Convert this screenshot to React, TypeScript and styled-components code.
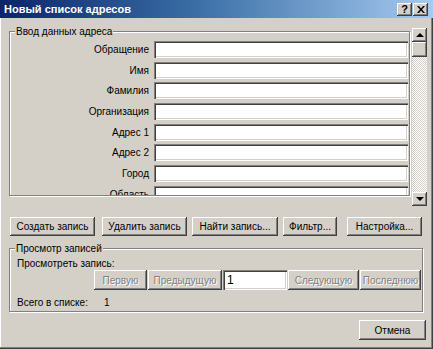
import React from 'react';
import styled, { createGlobalStyle } from 'styled-components';

const GlobalStyle = createGlobalStyle`
  html, body {
    margin: 0;
    padding: 0;
    background: #d4d0c8;
  }
  body {
    font-family: "Liberation Sans", Arial, sans-serif;
    font-size: 10px;
    color: #000;
  }
  * {
    box-sizing: border-box;
  }
`;

const Window = styled.div`
  width: 433px;
  height: 349px;
  display: flex;
  flex-direction: column;
  background: #d4d0c8;
  box-shadow: inset -1px -1px 0 #404040, inset -2px -2px 0 #808080, inset 1px 0 0 #fff;
  overflow: hidden;
`;

const TitleBar = styled.div`
  height: 18px;
  flex: none;
  display: flex;
  align-items: center;
  justify-content: space-between;
  padding: 0 5px 0 4px;
  background: linear-gradient(to right, #0a246a 0%, #3a6ea5 45%, #a6caf0 100%);
`;

const TitleText = styled.span`
  color: #fff;
  font-weight: bold;
  font-size: 11px;
`;

const CaptionButtons = styled.div`
  display: flex;
  gap: 1px;
`;

const CaptionButton = styled.div`
  width: 15px;
  height: 13px;
  display: flex;
  align-items: center;
  justify-content: center;
  background: #d4d0c8;
  box-shadow: inset -1px -1px 0 #404040, inset 1px 1px 0 #fff, inset -2px -2px 0 #808080;
  font-weight: bold;
  font-size: 11px;
  line-height: 1;
`;

const Body = styled.div`
  flex: 1;
  display: flex;
  flex-direction: column;
  padding: 10px 6px 0 9px;
`;

const TopRow = styled.div`
  display: flex;
  align-items: flex-start;
  gap: 2px;
`;

const Group = styled.div<{ $w: number; $h: number }>`
  position: relative;
  width: ${({ $w }) => $w}px;
  height: ${({ $h }) => $h}px;
  border: 1px solid #808080;
  box-shadow: inset 1px 1px 0 #fff, 1px 1px 0 #fff;
  flex: none;
`;

const Legend = styled.span`
  position: absolute;
  top: -7px;
  left: 5px;
  padding: 0 1px;
  background: #d4d0c8;
  line-height: 13px;
  z-index: 1;
`;

const FieldArea = styled.div`
  height: 100%;
  overflow: hidden;
  padding: 9px 1px 0 0;
  display: flex;
  flex-direction: column;
  gap: 3.7px;
`;

const FieldRow = styled.div`
  display: grid;
  grid-template-columns: 139px 1fr;
  column-gap: 5px;
  align-items: center;
  height: 17px;
  flex: none;
`;

const FieldLabel = styled.span`
  text-align: right;
  white-space: nowrap;
`;

const TextBox = styled.div<{ $w?: number }>`
  height: ${({ $w }) => ($w ? '20px' : '17px')};
  ${({ $w }) => ($w ? `width: ${$w}px;` : '')}
  background: #fff;
  box-shadow: inset 1px 1px 0 #808080, inset 2px 2px 0 #404040, inset -1px -1px 0 #fff,
    inset -2px -2px 0 #d4d0c8;
  padding: 3px 0 0 4px;
  flex: none;
  font-size: 12px;
`;

const ScrollBar = styled.div`
  width: 15px;
  height: 178px;
  flex: none;
  display: flex;
  flex-direction: column;
`;

const ScrollButton = styled.div<{ $h: number }>`
  height: ${({ $h }) => $h}px;
  flex: none;
  display: flex;
  align-items: center;
  justify-content: center;
  background: #d4d0c8;
  box-shadow: inset -1px -1px 0 #404040, inset 1px 1px 0 #fff, inset -2px -2px 0 #808080;
`;

const Arrow = styled.div<{ $up?: boolean }>`
  width: 0;
  height: 0;
  border-left: 4px solid transparent;
  border-right: 4px solid transparent;
  ${({ $up }) => ($up ? 'border-bottom: 4px solid #000;' : 'border-top: 4px solid #000;')}
`;

const Track = styled.div`
  flex: 1;
  background-color: #fff;
  background-image: repeating-conic-gradient(#d4d0c8 0% 25%, #fff 0% 50%);
  background-size: 2px 2px;
`;

const ButtonRow = styled.div`
  display: flex;
  margin-top: 11px;
`;

const PushButton = styled.div<{ $w: number; $ml?: number; $h?: number; $disabled?: boolean }>`
  width: ${({ $w }) => $w}px;
  height: ${({ $h }) => $h ?? 19}px;
  margin-left: ${({ $ml }) => $ml ?? 0}px;
  flex: none;
  display: flex;
  align-items: center;
  justify-content: center;
  white-space: nowrap;
  background: #d4d0c8;
  box-shadow: inset -1px -1px 0 #404040, inset 1px 1px 0 #fff, inset -2px -2px 0 #808080;
  color: ${({ $disabled }) => ($disabled ? '#808080' : '#000')};
  text-shadow: ${({ $disabled }) => ($disabled ? '1px 1px 0 #fff' : 'none')};
`;

const ViewArea = styled.div`
  padding: 8px 0 0 7px;
  display: flex;
  flex-direction: column;
`;

const Line = styled.div`
  height: 13px;
  line-height: 13px;
  display: flex;
`;

const NavRow = styled.div`
  display: flex;
  gap: 1px;
  margin-left: 77px;
`;

const Count = styled.div`
  height: 13px;
  line-height: 13px;
  margin-top: 6px;
  display: flex;
`;

const CountLabel = styled.span`
  width: 87px;
`;

const Footer = styled.div`
  display: flex;
  justify-content: flex-end;
  margin-top: 8px;
  padding-right: 1px;
`;

const fields = ['Обращение', 'Имя', 'Фамилия', 'Организация', 'Адрес 1', 'Адрес 2', 'Город', 'Область'];

const actions = [
  { label: 'Создать запись', w: 85, ml: 1 },
  { label: 'Удалить запись', w: 85, ml: 7 },
  { label: 'Найти запись...', w: 86, ml: 5 },
  { label: 'Фильтр...', w: 54, ml: 5 },
  { label: 'Настройка...', w: 75, ml: 10 },
];

const App: React.FC = () => {
  return (
    <>
      <GlobalStyle />
      <Window>
        <TitleBar>
          <TitleText>Новый список адресов</TitleText>
          <CaptionButtons>
            <CaptionButton>?</CaptionButton>
            <CaptionButton>
              <svg width="8" height="7" viewBox="0 0 8 7">
                <path d="M0 0h2l2 2.5 2-2.5h2l-3 3.5 3 3.5h-2l-2-2.5-2 2.5h-2l3-3.5z" fill="#000" />
              </svg>
            </CaptionButton>
          </CaptionButtons>
        </TitleBar>

        <Body>
          <TopRow>
            <Group $w={401} $h={165} style={{ marginTop: 3 }}>
              <Legend>Ввод данных адреса</Legend>
              <FieldArea>
                {fields.map(f => (
                  <FieldRow key={f}>
                    <FieldLabel>{f}</FieldLabel>
                    <TextBox />
                  </FieldRow>
                ))}
              </FieldArea>
            </Group>
            <ScrollBar>
              <ScrollButton $h={14}>
                <Arrow $up />
              </ScrollButton>
              <ScrollButton $h={15} />
              <Track />
              <ScrollButton $h={14}>
                <Arrow />
              </ScrollButton>
            </ScrollBar>
          </TopRow>

          <ButtonRow>
            {actions.map(a => (
              <PushButton key={a.label} $w={a.w} $ml={a.ml}>
                {a.label}
              </PushButton>
            ))}
          </ButtonRow>

          <Group $w={414} $h={64} style={{ marginTop: 12 }}>
            <Legend>Просмотр записей</Legend>
            <ViewArea>
              <Line>Просмотреть запись:</Line>
              <NavRow>
                <PushButton $w={53} $h={20} $disabled>Первую</PushButton>
                <PushButton $w={74} $h={20} $disabled>Предыдущую</PushButton>
                <TextBox $w={64}>1</TextBox>
                <PushButton $w={71} $h={20} $disabled>Следующую</PushButton>
                <PushButton $w={61} $h={20} $disabled>Последнюю</PushButton>
              </NavRow>
              <Count>
                <CountLabel>Всего в списке:</CountLabel>
                <span>1</span>
              </Count>
            </ViewArea>
          </Group>

          <Footer>
            <PushButton $w={67} $h={20}>Отмена</PushButton>
          </Footer>
        </Body>
      </Window>
    </>
  );
};

export default App;
